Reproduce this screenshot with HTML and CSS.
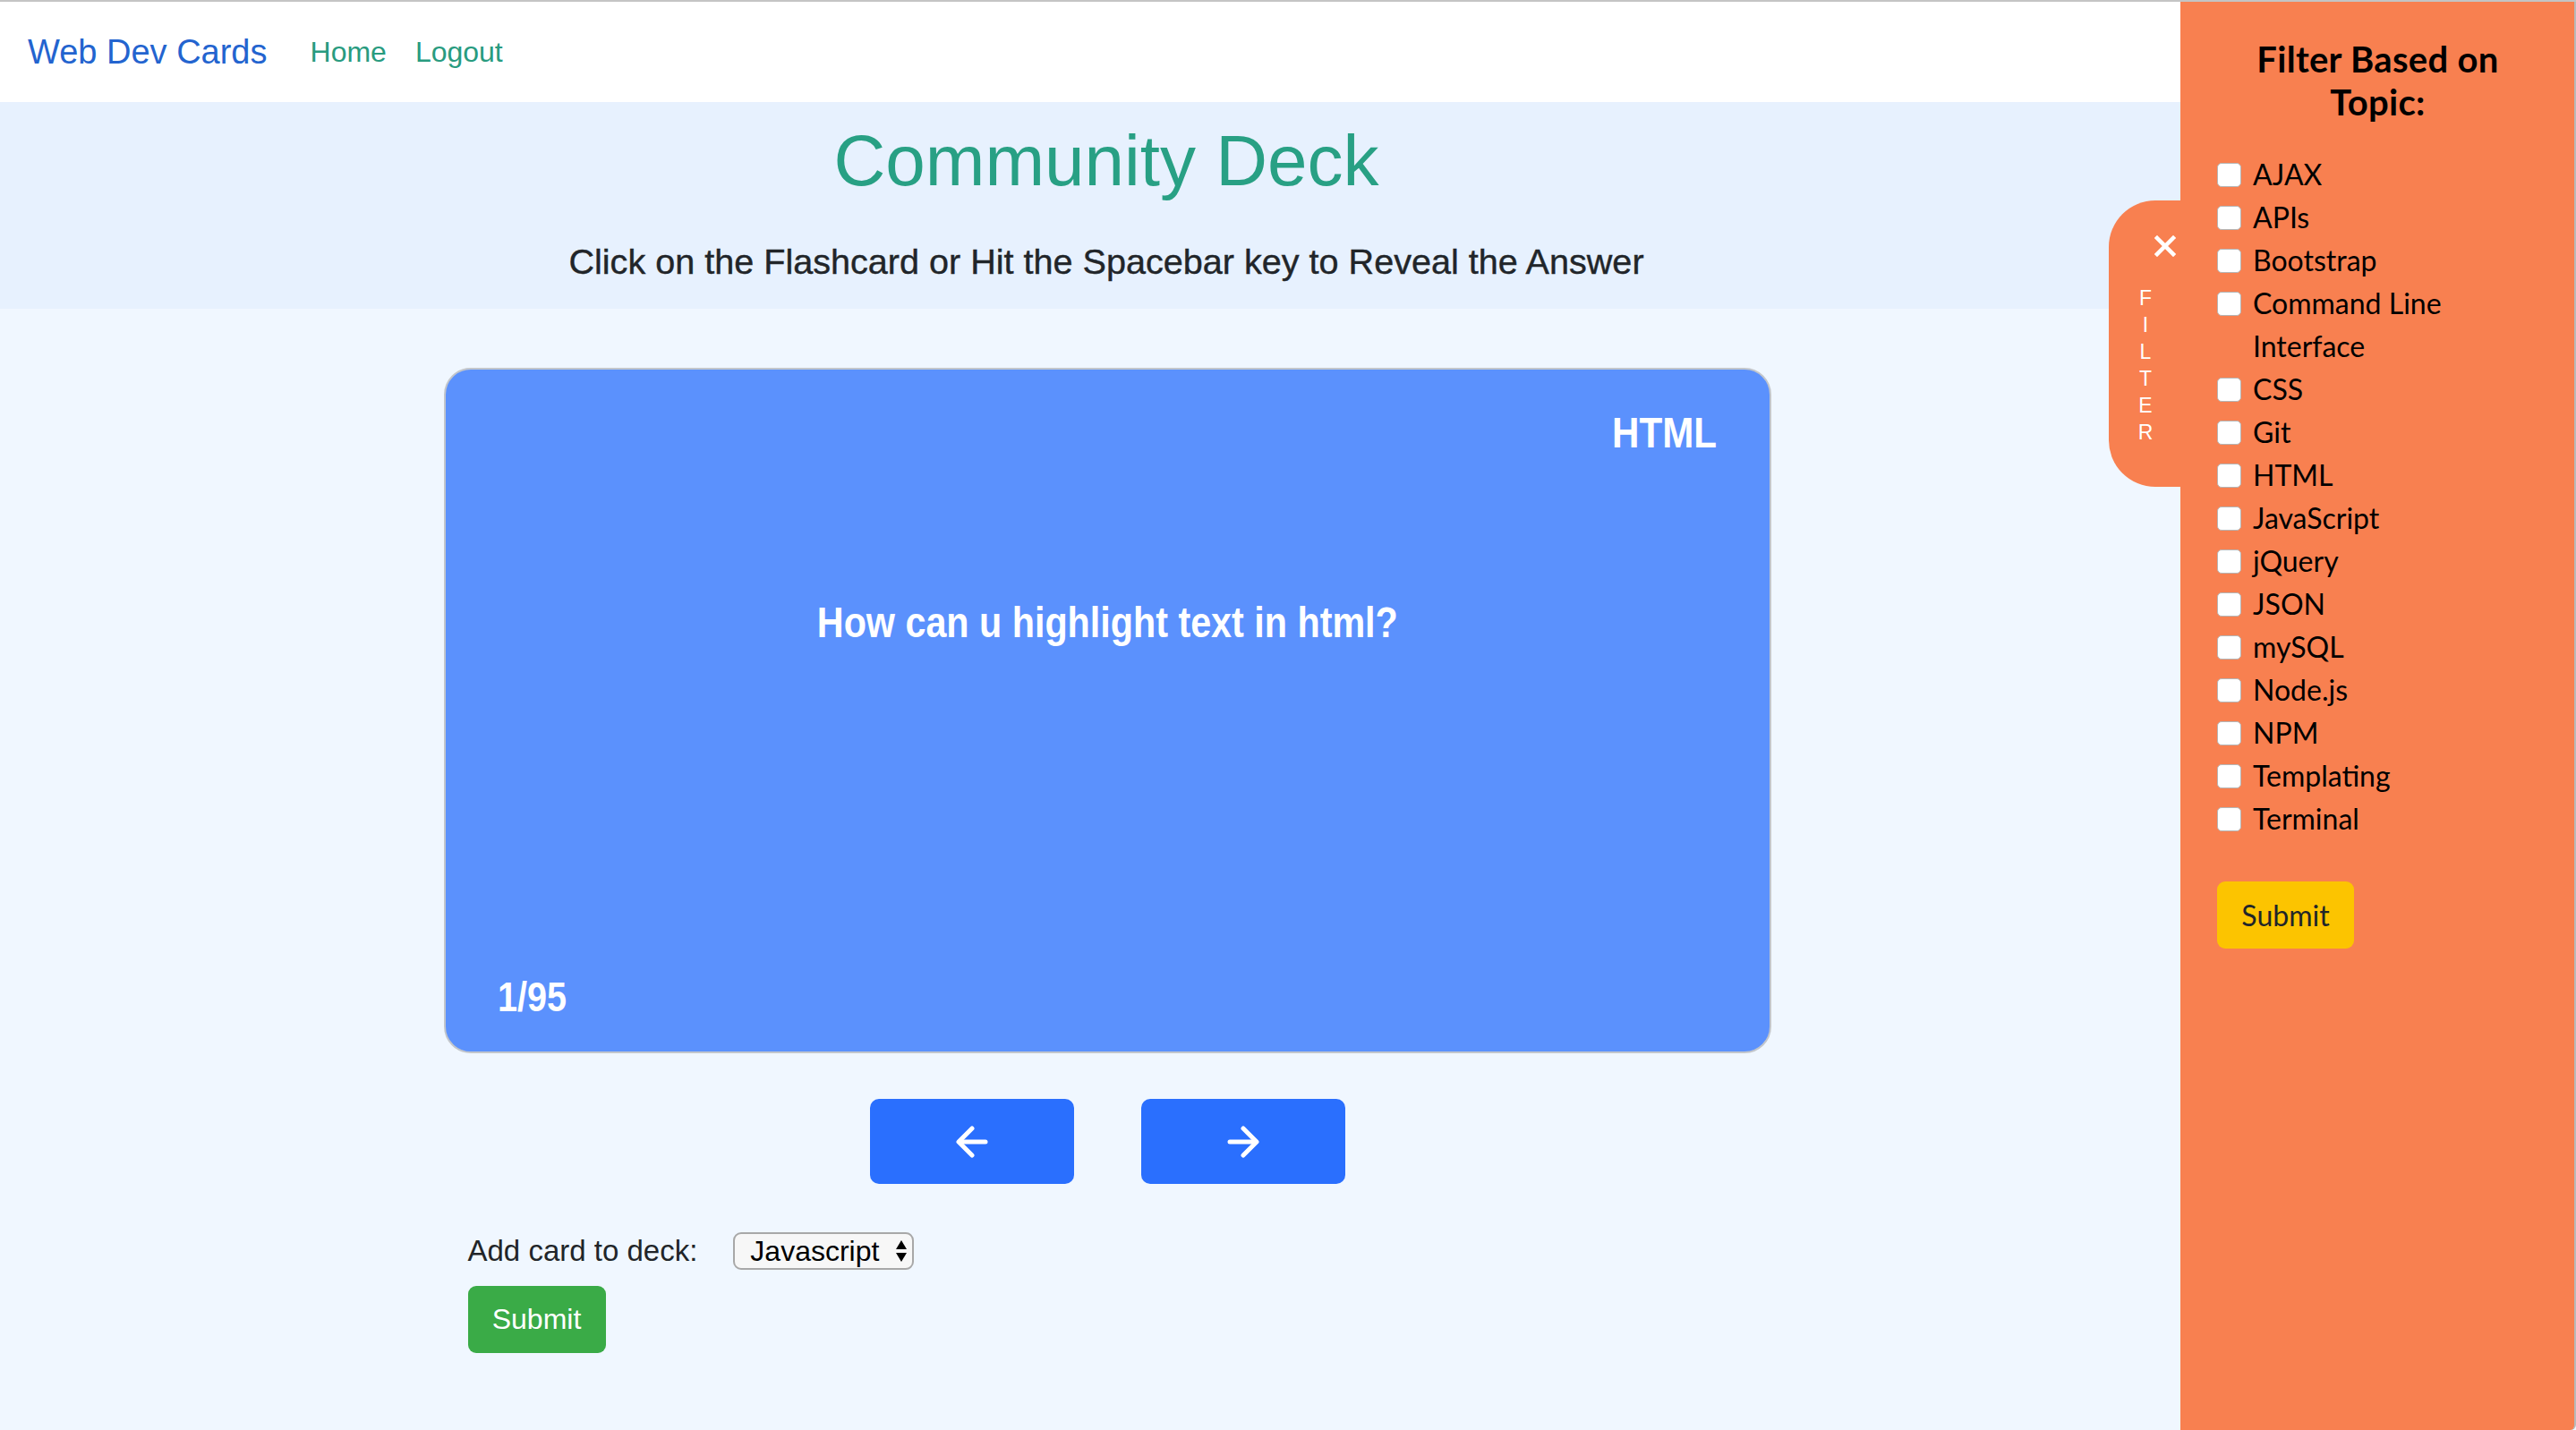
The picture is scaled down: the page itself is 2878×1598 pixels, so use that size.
FILE: index.html
```html
<!DOCTYPE html>
<html lang="en">
<head>
<meta charset="utf-8">
<title>Web Dev Cards - Community Deck</title>
<link rel="stylesheet" href="styles.css">
</head>
<body>
<div class="page">
  <div class="main">
    <nav class="navbar">
      <a class="brand" href="#">Web Dev Cards</a>
      <a class="nav-link" href="#">Home</a>
      <a class="nav-link" href="#">Logout</a>
    </nav>
    <header class="hero">
      <h1 class="hero-title">Community Deck</h1>
      <p class="hero-sub">Click on the Flashcard or Hit the Spacebar key to Reveal the Answer</p>
    </header>
    <section class="deck">
      <div class="deck-inner">
        <div class="card">
          <div class="card-topic"><span class="narrow narrow-right">HTML</span></div>
          <div class="card-question"><span class="narrow narrow-center">How can u highlight text in html?</span></div>
          <div class="card-count"><span class="narrow narrow-left">1/95</span></div>
        </div>
        <div class="nav-buttons">
          <button class="arrow-btn" type="button" aria-label="Previous">
            <svg width="36" height="36" viewBox="0 0 36 36" fill="none" stroke="#fff" stroke-width="5" stroke-linecap="round" stroke-linejoin="round"><line x1="33" y1="18" x2="4" y2="18"/><polyline points="18,3 3,18 18,33"/></svg>
          </button>
          <button class="arrow-btn" type="button" aria-label="Next">
            <svg width="36" height="36" viewBox="0 0 36 36" fill="none" stroke="#fff" stroke-width="5" stroke-linecap="round" stroke-linejoin="round"><line x1="3" y1="18" x2="32" y2="18"/><polyline points="18,3 33,18 18,33"/></svg>
          </button>
        </div>
        <form class="add-form">
          <div class="add-row">
            <label class="add-label" for="deck">Add card to deck:</label>
            <div class="select-wrap">
              <select id="deck" class="deck-select">
                <option>Javascript</option>
              </select>
              <svg class="select-arrows" width="14" height="26" viewBox="0 0 14 26"><polygon points="7,1 13,11 1,11" fill="#000"/><polygon points="1,15 13,15 7,25" fill="#000"/></svg>
            </div>
          </div>
          <button class="btn-success" type="button">Submit</button>
        </form>
      </div>
    </section>
  </div>
  <aside class="filter">
    <div class="filter-tab">
      <svg class="tab-close" width="24" height="24" viewBox="0 0 24 24" stroke="#fff" stroke-width="4.5" stroke-linecap="square"><line x1="3" y1="3" x2="21" y2="21"/><line x1="21" y1="3" x2="3" y2="21"/></svg>
      <span class="tab-letters">
        <span>F</span><span>I</span><span>L</span><span>T</span><span>E</span><span>R</span>
      </span>
    </div>
    <h2 class="filter-title">Filter Based on Topic:</h2>
    <ul class="topics">
      <li><span class="box"></span><span class="topic">AJAX</span></li>
      <li><span class="box"></span><span class="topic">APIs</span></li>
      <li><span class="box"></span><span class="topic">Bootstrap</span></li>
      <li><span class="box"></span><span class="topic">Command Line Interface</span></li>
      <li><span class="box"></span><span class="topic">CSS</span></li>
      <li><span class="box"></span><span class="topic">Git</span></li>
      <li><span class="box"></span><span class="topic">HTML</span></li>
      <li><span class="box"></span><span class="topic">JavaScript</span></li>
      <li><span class="box"></span><span class="topic">jQuery</span></li>
      <li><span class="box"></span><span class="topic">JSON</span></li>
      <li><span class="box"></span><span class="topic">mySQL</span></li>
      <li><span class="box"></span><span class="topic">Node.js</span></li>
      <li><span class="box"></span><span class="topic">NPM</span></li>
      <li><span class="box"></span><span class="topic">Templating</span></li>
      <li><span class="box"></span><span class="topic">Terminal</span></li>
    </ul>
    <button class="btn-warning" type="button">Submit</button>
  </aside>
</div>
</body>
</html>
```
FILE: styles.css
```css
* { box-sizing: border-box; }
html, body { margin: 0; padding: 0; }
body {
  font-family: "Liberation Sans", Arial, sans-serif;
  color: #212529;
  background: #f0f7ff;
  border-top: 2px solid #c4c4c4;
}
.page {
  display: flex;
  min-height: 1596px;
}
.main {
  flex: 1;
  min-width: 0;
}
.navbar {
  height: 112px;
  background: #fff;
  display: flex;
  align-items: center;
  padding: 0 32px 0 31px;
}
.brand {
  font-size: 38px;
  color: #2364cf;
  text-decoration: none;
  margin-right: 32px;
}
.nav-link {
  font-size: 32px;
  color: #289b7f;
  text-decoration: none;
  padding: 0 16px;
}
.hero {
  background: #e7f1fe;
  height: 231px;
  padding: 18px 0 0 36px;
  text-align: center;
}
.hero-title {
  margin: 0;
  font-size: 80px;
  line-height: 96px;
  font-weight: 400;
  color: #28a084;
}
.hero-sub {
  margin: 40px 0 0;
  font-size: 39.6px;
  line-height: 48px;
  font-weight: 400;
  color: #212529;
  -webkit-text-stroke: 0.4px #212529;
}
.deck {
  display: flex;
  justify-content: center;
  padding-left: 38px;
}
.deck-inner {
  width: 1483px;
}
.card {
  margin-top: 66px;
  height: 766px;
  background: #5b91fd;
  border: 2px solid #c2c6cc;
  border-radius: 30px;
  padding: 46px 58px 37px 58px;
  display: flex;
  flex-direction: column;
  color: #fff;
  font-weight: 700;
}
.narrow {
  display: inline-block;
  transform: scaleX(0.86);
}
.narrow-right { transform-origin: right center; }
.narrow-center { transform-origin: center center; }
.narrow-left { transform-origin: left center; }
.card-topic {
  align-self: flex-end;
  font-size: 49px;
  line-height: 48px;
}
.card-question {
  margin-top: 165px;
  text-align: center;
  font-size: 48px;
  line-height: 48px;
}
.card-count {
  margin-top: auto;
  font-size: 46px;
  line-height: 48px;
}
.nav-buttons {
  display: flex;
  justify-content: center;
  gap: 75px;
  margin-top: 51px;
}
.arrow-btn {
  width: 228px;
  height: 95px;
  border: none;
  border-radius: 10px;
  background: #2a6ffe;
  display: flex;
  align-items: center;
  justify-content: center;
  padding: 0;
}
.add-form {
  padding-left: 27px;
  margin-top: 51px;
}
.add-row {
  display: flex;
  align-items: center;
  gap: 40px;
  height: 48px;
}
.add-label {
  font-size: 33px;
}
.select-wrap {
  position: relative;
  width: 202px;
  height: 42px;
}
.deck-select {
  appearance: none;
  -webkit-appearance: none;
  width: 100%;
  height: 100%;
  border: 2px solid #a8a8a8;
  border-radius: 9px;
  background: #f7f7f7;
  font-family: "Liberation Sans", Arial, sans-serif;
  font-size: 32px;
  color: #000;
  padding: 0 0 0 17px;
  margin: 0;
}
.select-arrows {
  position: absolute;
  right: 7px;
  top: 8px;
  pointer-events: none;
}
.btn-success {
  margin-top: 15px;
  width: 154px;
  height: 75px;
  border: none;
  border-radius: 9px;
  background: #3aab47;
  color: #fff;
  font-family: "Liberation Sans", Arial, sans-serif;
  font-size: 32px;
  padding: 0;
}
.filter {
  position: relative;
  width: 442px;
  flex: 0 0 442px;
  background: #f88050;
  border-right: 2px solid #b9b9b9;
  border-bottom-right-radius: 6px;
  padding: 40px 40px 0 41px;
  font-family: Lato, "Open Sans", sans-serif;
  color: #000;
}
.filter-tab {
  position: absolute;
  left: -80px;
  top: 222px;
  width: 81px;
  height: 320px;
  background: #f88050;
  border-radius: 52px 0 0 52px;
  color: #fff;
}
.tab-close {
  position: absolute;
  left: 51px;
  top: 39px;
}
.tab-letters {
  position: absolute;
  left: 30px;
  top: 94px;
  width: 22px;
  display: flex;
  flex-direction: column;
  align-items: center;
  font-family: "Liberation Sans", Arial, sans-serif;
  font-size: 23px;
  line-height: 30px;
}
.filter-title {
  margin: 0;
  text-align: center;
  font-size: 40px;
  line-height: 48px;
  font-weight: 700;
  letter-spacing: 0.3px;
}
.topics {
  list-style: none;
  margin: 33px 0 0;
  padding: 0;
}
.topics li {
  display: flex;
  align-items: flex-start;
  font-size: 32px;
  line-height: 48px;
}
.box {
  flex: 0 0 27px;
  width: 27px;
  height: 27px;
  margin-top: 11px;
  margin-right: 13px;
  background: #fff;
  border: 1px solid #b5b5b5;
  border-radius: 5px;
}
.topic {
  max-width: 300px;
}
.btn-warning {
  margin-top: 46px;
  width: 153px;
  height: 75px;
  border: none;
  border-radius: 9px;
  background: #fcc400;
  color: #212529;
  font-family: Lato, "Open Sans", sans-serif;
  font-size: 32px;
  padding: 0;
}
```
